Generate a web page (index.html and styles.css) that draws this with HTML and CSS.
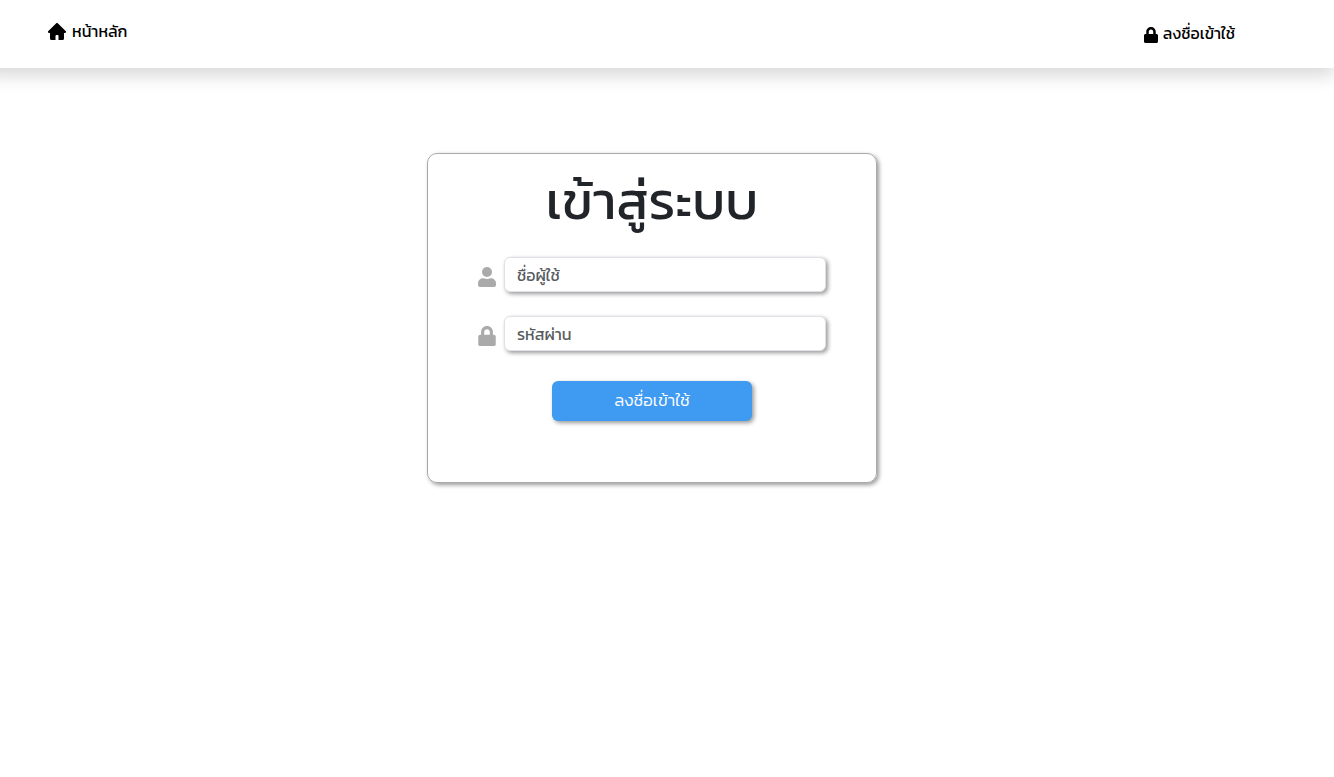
FILE: index.html
```html
<!DOCTYPE html>
<html lang="th">
<head>
<meta charset="utf-8">
<meta name="viewport" content="width=device-width, initial-scale=1">
<title>เข้าสู่ระบบ</title>
<link rel="stylesheet" href="styles.css">
</head>
<body>
<header class="navbar">
  <a class="nav-link" href="#">
    <svg class="icon-home" viewBox="0 0 18 17" aria-hidden="true"><path d="M8 .4a1.400 1.400 0 0 1 2 0L17.600 8c.9.900.4 2-.7 2H16v5.500a1.500 1.500 0 0 1-1.500 1.500H10.500v-4a1 1 0 0 0-1-1h-1a1 1 0 0 0-1 1v4H3.500A1.500 1.500 0 0 1 2 15.500V10h-.9C0 10-.5 8.900.4 8z"/></svg>
    <span>หน้าหลัก</span>
  </a>
  <a class="nav-link nav-login" href="#">
    <svg class="icon-lock" viewBox="0 0 448 512" aria-hidden="true"><path d="M400 224h-24v-72C376 68.200 307.800 0 224 0S72 68.200 72 152v72H48c-26.500 0-48 21.500-48 48v192c0 26.500 21.500 48 48 48h352c26.500 0 48-21.500 48-48V272c0-26.500-21.500-48-48-48zm-104 0H152v-72c0-39.700 32.300-72 72-72s72 32.300 72 72z"/></svg>
    <span>ลงชื่อเข้าใช้</span>
  </a>
</header>
<main class="page">
  <form class="card">
    <h1 class="title">เข้าสู่ระบบ</h1>
    <div class="field">
      <label class="field-label" for="username" aria-label="ชื่อผู้ใช้"><svg class="field-icon" viewBox="0 0 18 20" aria-hidden="true"><circle cx="9" cy="5" r="5"/><path d="M5 11.200h.8a8 8 0 0 0 6.400 0h.8a5 5 0 0 1 5 5V18a2 2 0 0 1-2 2H2a2 2 0 0 1-2-2v-1.800a5 5 0 0 1 5-5z"/></svg></label>
      <input class="input" id="username" type="text" placeholder="ชื่อผู้ใช้">
    </div>
    <div class="field">
      <label class="field-label" for="password" aria-label="รหัสผ่าน"><svg class="field-icon" viewBox="0 0 448 512" aria-hidden="true"><path d="M400 224h-24v-72C376 68.200 307.800 0 224 0S72 68.200 72 152v72H48c-26.500 0-48 21.500-48 48v192c0 26.500 21.500 48 48 48h352c26.500 0 48-21.500 48-48V272c0-26.500-21.500-48-48-48zm-104 0H152v-72c0-39.700 32.300-72 72-72s72 32.300 72 72z"/></svg></label>
      <input class="input" id="password" type="password" placeholder="รหัสผ่าน">
    </div>
    <button class="submit" type="button">ลงชื่อเข้าใช้</button>
  </form>
</main>
</body>
</html>
```
FILE: styles.css
```css
* {
  box-sizing: border-box;
}

body {
  margin: 0;
  background: #fff;
  color: #212529;
  font-family: Kanit, Prompt, "Noto Sans Thai", "Noto Sans", sans-serif;
  font-size: 16px;
  font-weight: 400;
  line-height: 24px;
}

.navbar {
  display: flex;
  justify-content: space-between;
  align-items: flex-start;
  margin-left: -16px;
  padding: 19px 99px 23px 64px;
  box-shadow: 0 8px 16px rgba(0, 0, 0, 0.15);
}

.nav-link {
  display: flex;
  align-items: center;
  gap: 6px;
  color: #000;
  text-decoration: none;
}

.nav-login {
  gap: 5px;
  padding-top: 2px;
}

.icon-home {
  width: 18px;
  height: 17px;
}

.icon-lock {
  width: 14px;
  height: 16px;
  margin-top: 3px;
}

.page {
  display: flex;
  justify-content: center;
  padding: 85px 30px 40px 0;
}

.card {
  display: flex;
  flex-direction: column;
  align-items: center;
  width: 450px;
  max-width: 100%;
  padding: 15px 50px 61px;
  border: 1px solid #aaa;
  border-radius: 10px;
  box-shadow: 2px 2px 4px #999;
}

.title {
  margin: 0 0 24px;
  font-size: 53px;
  line-height: 64px;
  font-weight: 400;
}

.field {
  display: flex;
  align-items: center;
  gap: 8px;
  width: 100%;
  margin-bottom: 24px;
}

.field-label {
  display: flex;
  padding-top: 4px;
}

.field-icon {
  width: 18px;
  height: 20px;
  fill: #aaa;
}

.input {
  flex: 1;
  min-width: 0;
  height: 35px;
  padding: 0 12px;
  border: 1px solid #dee2e6;
  border-radius: 6px;
  background: #fff;
  box-shadow: 2px 2px 4px #999;
  font: inherit;
}

.input::placeholder {
  color: #595c5f;
  opacity: 1;
}

.submit {
  width: 200px;
  height: 40px;
  margin-top: 6px;
  padding: 0 0 2px;
  border: 0;
  border-radius: 6px;
  background: #3f9af2;
  box-shadow: 2px 2px 4px #999;
  color: #fff;
  font: inherit;
  font-size: 17px;
  font-weight: 300;
}
```
